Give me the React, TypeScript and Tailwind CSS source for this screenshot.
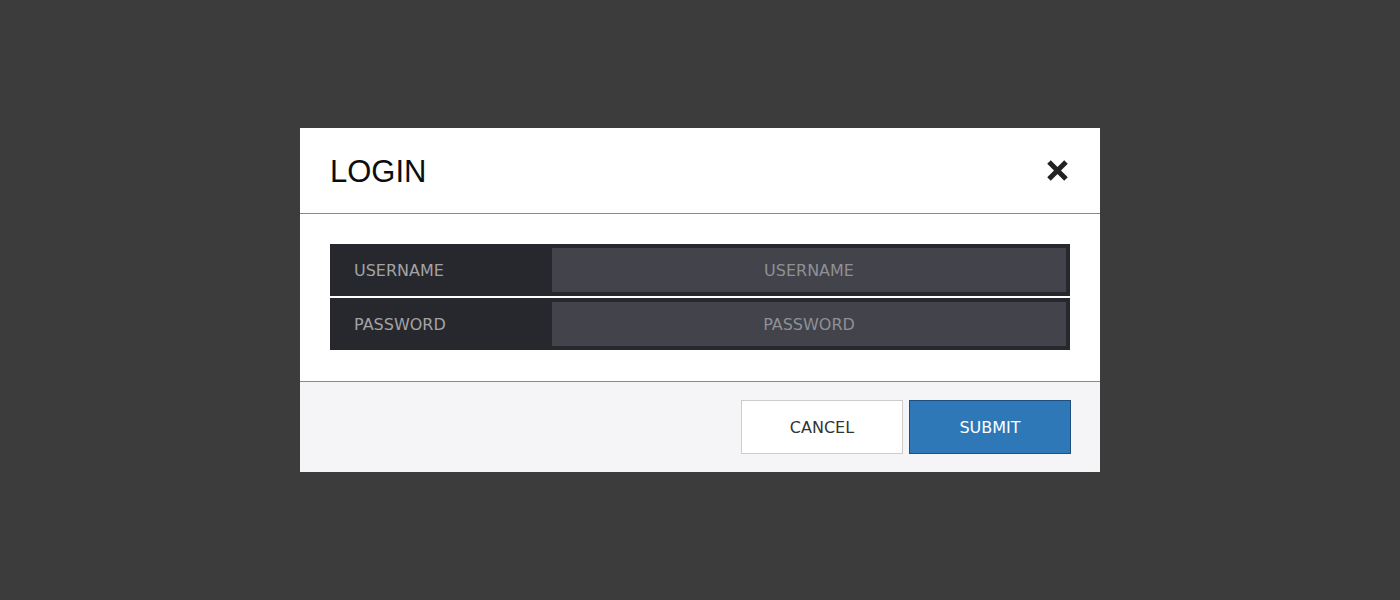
export default function App() {
  return (
    <div className="flex h-[600px] w-full items-center justify-center bg-[#3c3c3c]">
      <div className="flex w-[800px] flex-col bg-white">
        <div className="flex h-[86px] items-center justify-between border-b border-[#8a8a8a] pl-[30px] pr-[31px]">
          <h1 className="pt-[2px] font-['Liberation_Sans',Arial,sans-serif] text-[31px] leading-none text-[#0d0d0d]">
            LOGIN
          </h1>
          <button className="flex h-[23px] w-[23px] items-center justify-center">
            <svg width="23" height="23" viewBox="0 0 23 23">
              <path
                d="M3 3 L20 20 M20 3 L3 20"
                stroke="#222"
                strokeWidth="5"
                strokeLinecap="butt"
              />
            </svg>
          </button>
        </div>

        <div className="flex flex-col gap-[2px] px-[30px] pt-[30px] pb-[31px] font-['DejaVu_Sans',sans-serif] text-[16px]">
          <Field label="USERNAME" />
          <Field label="PASSWORD" />
        </div>

        <div className="flex h-[91px] items-center justify-end gap-[6px] border-t border-[#8a8a8a] bg-[#f5f5f7] pr-[29px] font-['DejaVu_Sans',sans-serif] text-[16px]">
          <button className="h-[54px] w-[162px] border border-[#cccccc] bg-white pt-[2px] text-[#333]">
            CANCEL
          </button>
          <button className="h-[54px] w-[162px] border border-[#1f4f7e] bg-[#2f78b7] pt-[2px] text-white">
            SUBMIT
          </button>
        </div>
      </div>
    </div>
  );
}

function Field({ label }: { label: string }) {
  return (
    <div className="flex h-[52px] items-stretch bg-[#27282d] p-[4px]">
      <div className="flex w-[218px] items-center pl-[20px] pt-[2px] text-[#a3a3a6]">{label}</div>
      <input
        placeholder={label}
        className="flex-1 bg-[#42434b] pt-[2px] text-center text-[#ccc] outline-none placeholder:text-[#8f9095]"
      />
    </div>
  );
}
